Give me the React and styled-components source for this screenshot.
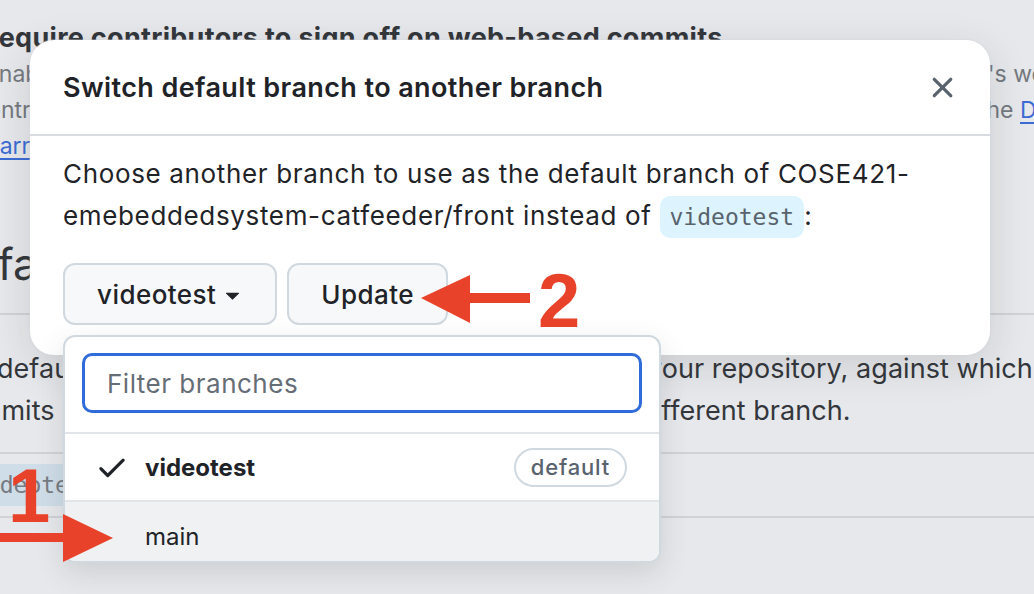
import styled, { createGlobalStyle } from "styled-components";

const GlobalStyle = createGlobalStyle`
  html, body {
    margin: 0;
    padding: 0;
  }
  body {
    font-family: Inter, "Noto Sans", sans-serif;
    background: #e7e8eb;
    overflow: hidden;
  }
`;

const Page = styled.div`
  position: relative;
  width: 1034px;
  height: 594px;
  overflow: hidden;
  background: #e7e8eb;
`;

// dimmed settings page under the dialog
const Backdrop = styled.div`
  padding-top: 20px;
  color: #33373c;
  white-space: nowrap;
`;

const CheckTitle = styled.div`
  font-size: 27px;
  font-weight: 700;
  line-height: 36px;
  letter-spacing: 0.3px;
  margin-left: -19px;
`;

const DescLine = styled.div`
  display: grid;
  grid-template-columns: ${(p) => p.split}px auto;
  font-size: 23px;
  line-height: 36px;
  color: #74797f;
  overflow: hidden;
`;

const Cut = styled.span`
  margin-left: ${(p) => p.shift || 0}px;
  overflow: hidden;
`;

const BgLink = styled.a`
  color: #3b6cd4;
  text-decoration: underline;
  text-underline-offset: 4px;
`;

const BigHeading = styled.h2`
  margin: 72px 0 0 -60px;
  font-size: 44px;
  font-weight: 400;
  line-height: 56px;
`;

const Rule = styled.div`
  margin-top: 21px;
  height: 2px;
  background: #d0d2d6;
`;

const ParaLine = styled(DescLine)`
  font-size: 27px;
  line-height: 42px;
  letter-spacing: 0.05px;
  color: #33373c;
  margin-top: ${(p) => p.top || 0}px;
`;

const BranchBox = styled.div`
  margin-top: 20px;
  padding: 10px 0;
  border-top: 2px solid #d0d2d6;
  border-bottom: 2px solid #d0d2d6;
`;

const BgCode = styled.span`
  display: inline-block;
  margin-left: -40px;
  padding: 0 12px;
  height: 42px;
  line-height: 42px;
  width: 200px;
  background: #cfdde8;
  color: #767b82;
  font-family: "DejaVu Sans Mono", monospace;
  font-size: 23px;
`;

// dialog
const Modal = styled.section`
  position: absolute;
  left: 30px;
  top: 40px;
  width: 960px;
  background: #ffffff;
  border-radius: 24px;
  box-shadow: 0 0 0 1px rgba(208, 215, 222, 0.35),
    0 10px 40px rgba(37, 41, 46, 0.14);
  color: #1f2328;
`;

const Header = styled.header`
  display: flex;
  align-items: center;
  justify-content: space-between;
  height: 94px;
  padding: 0 30px 0 33px;
  border-bottom: 2px solid #d8dce1;
`;

const Title = styled.h1`
  margin: 0;
  font-size: 27px;
  font-weight: 600;
  letter-spacing: 0.4px;
`;

const CloseButton = styled.button`
  display: flex;
  padding: 0;
  border: 0;
  background: none;
  color: #59636e;
`;

const Body = styled.div`
  padding: 17px 33px 30px;
`;

const Lead = styled.p`
  margin: 0;
  font-size: 26px;
  line-height: 42px;
  letter-spacing: 0.65px;
`;

const Code = styled.code`
  padding: 8px 10px;
  border-radius: 10px;
  background: #ddf4ff;
  color: #59636e;
  font-family: "DejaVu Sans Mono", monospace;
  font-size: 23px;
  letter-spacing: 0;
`;

const ButtonRow = styled.div`
  position: relative;
  display: flex;
  gap: 10px;
  margin-top: 25px;
`;

const Button = styled.button`
  display: inline-flex;
  align-items: center;
  gap: 2px;
  height: 62px;
  padding: 0 ${(p) => (p.caret ? 28 : 32)}px 0 32px;
  border: 2px solid #d1d9e0;
  border-radius: 12px;
  background: #f6f8fa;
  color: #1f2328;
  font-family: inherit;
  font-size: 26px;
  font-weight: 500;
  letter-spacing: 0.45px;
`;

const Menu = styled.div`
  position: absolute;
  top: calc(100% + 10px);
  left: 0;
  width: 598px;
  box-sizing: border-box;
  background: #ffffff;
  border: 2px solid #d1d9e0;
  border-radius: 12px;
  box-shadow: 0 10px 28px rgba(66, 74, 83, 0.16);
  overflow: hidden;
  z-index: 2;
`;

const FilterBox = styled.div`
  padding: 16px 17px 19px;
  border-bottom: 2px solid #e1e4e8;
`;

const FilterInput = styled.input`
  width: 100%;
  box-sizing: border-box;
  height: 60px;
  padding: 0 22px;
  border: 3px solid #2f6bd9;
  border-radius: 10px;
  outline: none;
  font-family: inherit;
  font-size: 26px;
  letter-spacing: 0.5px;
  color: #1f2328;
  &::placeholder {
    color: #656d76;
  }
`;

const Item = styled.div`
  display: flex;
  align-items: center;
  gap: 16px;
  box-sizing: border-box;
  height: ${(p) => (p.last ? 59 : 68)}px;
  padding: ${(p) => (p.last ? 9 : 0)}px 32px 0 30px;
  border-bottom: 2px solid #e1e4e8;
  background: ${(p) => (p.hover ? "#eff1f3" : "#ffffff")};
  font-size: 24px;
  font-weight: ${(p) => (p.selected ? 700 : 400)};
  &:last-child {
    border-bottom: 0;
  }
`;

const IconSlot = styled.span`
  display: flex;
  width: 34px;
  height: 34px;
  color: #1f2328;
`;

const Pill = styled.span`
  margin-left: auto;
  box-sizing: border-box;
  height: 39px;
  padding: 0 15px;
  display: flex;
  align-items: center;
  border: 2px solid #d1d9e0;
  border-radius: 20px;
  color: #59636e;
  font-size: 22px;
  font-weight: 500;
  letter-spacing: 0.8px;
`;

// red annotations on top
const Marks = styled.svg`
  position: absolute;
  inset: 0;
  pointer-events: none;
  z-index: 5;
`;

const Num = styled.span`
  position: absolute;
  left: ${(p) => p.x}px;
  top: ${(p) => p.y}px;
  font-family: "Liberation Sans", Arial, sans-serif;
  font-weight: 700;
  font-size: 76px;
  line-height: 76px;
  color: #e8432a;
  z-index: 6;
`;

const XIcon = () => (
  <svg width="35" height="35" viewBox="0 0 16 16" fill="currentColor">
    <path d="M3.72 3.72a.75.75 0 0 1 1.06 0L8 6.94l3.22-3.22a.749.749 0 0 1 1.275.326.749.749 0 0 1-.215.734L9.06 8l3.22 3.22a.749.749 0 0 1-.326 1.275.749.749 0 0 1-.734-.215L8 9.06l-3.22 3.22a.751.751 0 0 1-1.042-.018.751.751 0 0 1-.018-1.042L6.94 8 3.72 4.78a.75.75 0 0 1 0-1.06Z" />
  </svg>
);

const CaretIcon = () => (
  <svg width="29" height="29" viewBox="0 0 16 16" fill="currentColor">
    <path d="m4.427 7.427 3.396 3.396a.25.25 0 0 0 .354 0l3.396-3.396A.25.25 0 0 0 11.396 7H4.604a.25.25 0 0 0-.177.427Z" />
  </svg>
);

const CheckIcon = () => (
  <svg width="34" height="34" viewBox="0 0 16 16" fill="currentColor">
    <path d="M13.78 4.22a.75.75 0 0 1 0 1.06l-7.25 7.25a.75.75 0 0 1-1.06 0L2.22 9.28a.751.751 0 0 1 .018-1.042.751.751 0 0 1 1.042-.018L6 10.94l6.72-6.72a.75.75 0 0 1 1.06 0Z" />
  </svg>
);

const branches = [
  { name: "videotest", selected: true, isDefault: true },
  { name: "main", hover: true },
];

export default function App() {
  return (
    <Page>
      <GlobalStyle />
      <Backdrop>
        <CheckTitle>Require contributors to sign off on web-based commits</CheckTitle>
        <DescLine split={913}>
          <Cut shift={-15}>Enabling this setting will require contributors to sign off</Cut>
          <span>GitHub's web interface.</span>
        </DescLine>
        <DescLine split={979}>
          <Cut shift={-26}>contributors to affirm that their commit complies with</Cut>
          <span>
            the <BgLink>Developer Certificate of Origin</BgLink>
          </span>
        </DescLine>
        <DescLine split={600}>
          <Cut shift={-27}>
            <BgLink>Learn more about signing off on commits</BgLink>
          </Cut>
          <span />
        </DescLine>
        <BigHeading>Default branch</BigHeading>
        <Rule />
        <ParaLine split={647} top={33}>
          <Cut shift={-60}>The default branch is considered the “base” branch in</Cut>
          <span>your repository, against which all pull requests</span>
        </ParaLine>
        <ParaLine split={638}>
          <Cut shift={-54}>commits are automatically made, unless you specify a</Cut>
          <span>different branch.</span>
        </ParaLine>
        <BranchBox>
          <BgCode>videotest</BgCode>
        </BranchBox>
      </Backdrop>

      <Modal>
        <Header>
          <Title>Switch default branch to another branch</Title>
          <CloseButton aria-label="Close">
            <XIcon />
          </CloseButton>
        </Header>
        <Body>
          <Lead>
            Choose another branch to use as the default branch of COSE421-
            <br />
            emebeddedsystem-catfeeder/front instead of <Code>videotest</Code>:
          </Lead>
          <ButtonRow>
            <Button caret>
              videotest
              <CaretIcon />
            </Button>
            <Button>Update</Button>
            <Menu>
              <FilterBox>
                <FilterInput placeholder="Filter branches" />
              </FilterBox>
              {branches.map((b, i) => (
                <Item
                  key={b.name}
                  selected={b.selected}
                  hover={b.hover}
                  last={i === branches.length - 1}
                >
                  <IconSlot>{b.selected && <CheckIcon />}</IconSlot>
                  {b.name}
                  {b.isDefault && <Pill>default</Pill>}
                </Item>
              ))}
            </Menu>
          </ButtonRow>
        </Body>
      </Modal>

      <Marks width="1034" height="594" viewBox="0 0 1034 594">
        <rect x="468" y="293" width="62" height="10" fill="#e8432a" />
        <polygon points="421,298 470,275 470,323" fill="#e8432a" />
        <rect x="-5" y="533" width="70" height="9" fill="#e8432a" />
        <polygon points="63,514 113,538 63,562" fill="#e8432a" />
      </Marks>
      <Num x={538} y={263}>2</Num>
      <Num x={8} y={458}>1</Num>
    </Page>
  );
}
